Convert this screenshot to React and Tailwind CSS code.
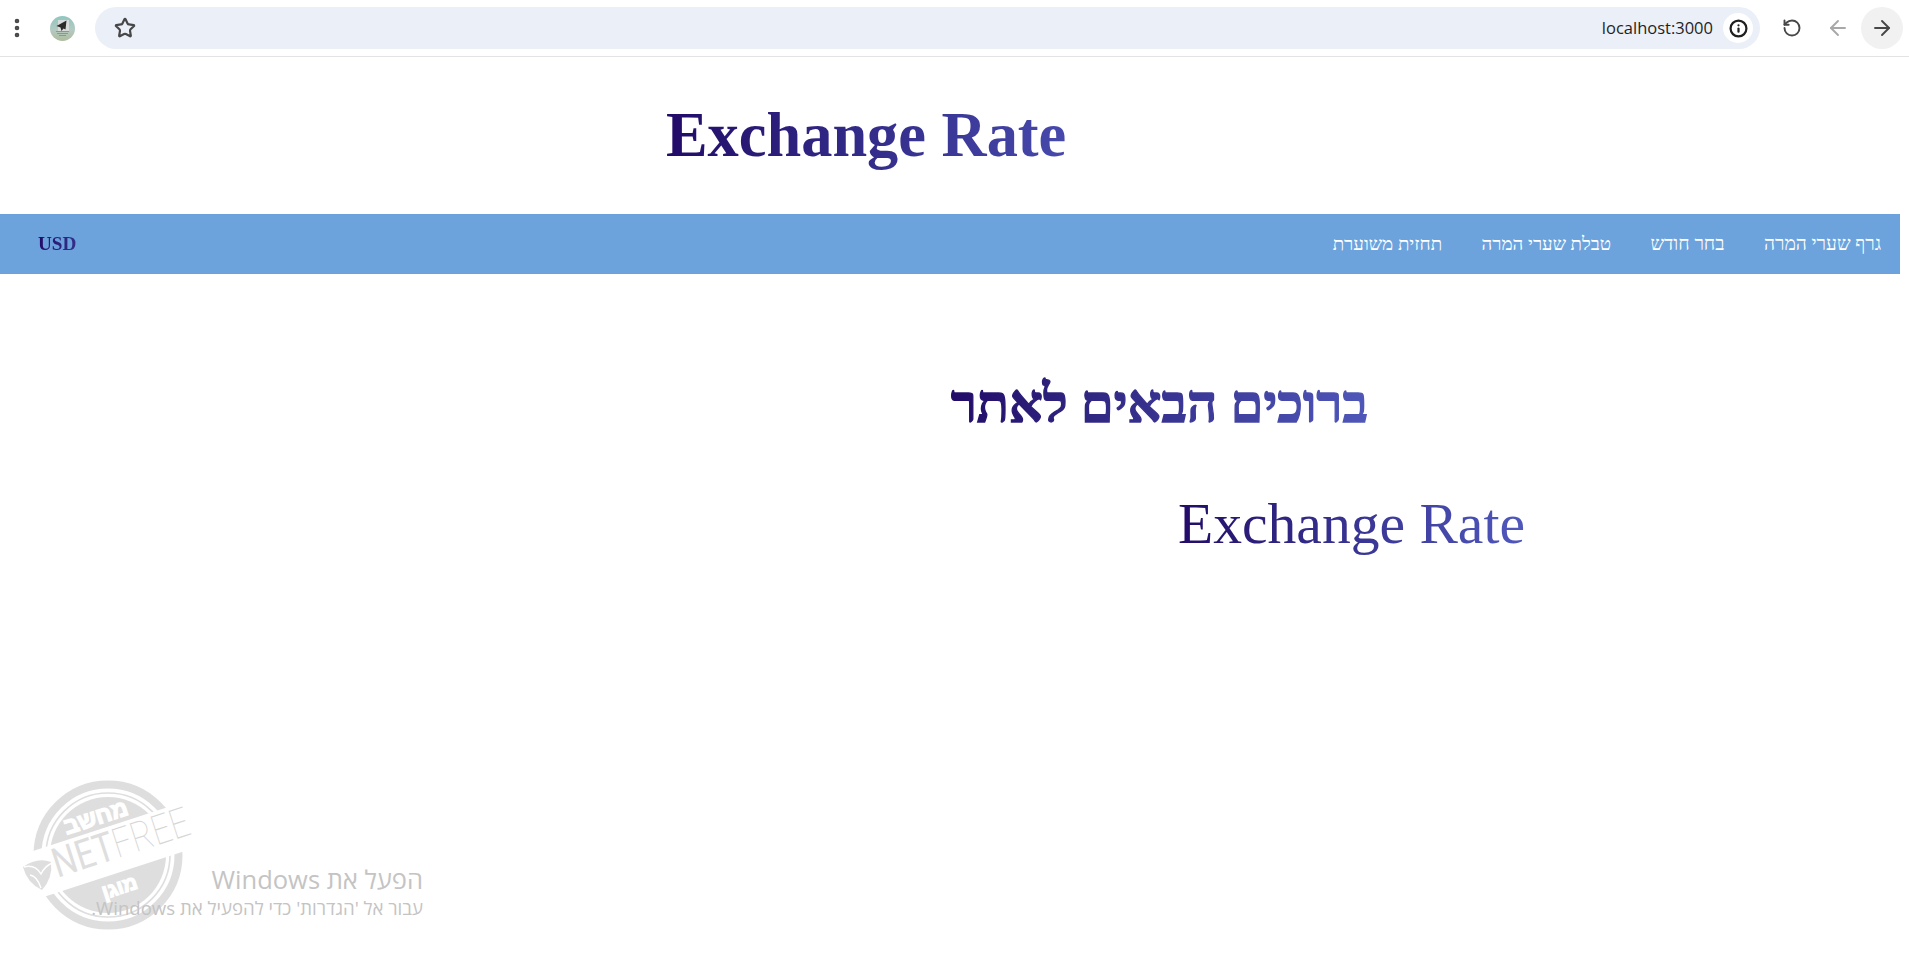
import React from 'react';
import { ArrowLeft, ArrowRight, Info, MoreVertical, RotateCcw, Star } from 'lucide-react';

const navItems = [
  { label: 'גרף שערי המרה', size: 'text-[19.2px]' },
  { label: 'בחר חודש', size: 'text-[19.2px]' },
  { label: 'טבלת שערי המרה', size: 'text-[18.7px]' },
  { label: 'תחזית משוערת', size: 'text-[18.8px]' },
];

function Favicon() {
  return (
    <svg viewBox="0 0 25 25" className="ml-[21px] h-[25px] w-[25px]">
      <defs>
        <linearGradient id="fav" x1="0" y1="0" x2="0" y2="1">
          <stop offset="0" stopColor="#8fc6c0" />
          <stop offset="0.55" stopColor="#b4c9c2" />
          <stop offset="1" stopColor="#aebd9e" />
        </linearGradient>
      </defs>
      <circle cx="12.5" cy="12.5" r="12.5" fill="url(#fav)" />
      <rect x="8" y="4" width="11" height="11" fill="#d8dcd9" />
      <path d="M16.5 4.5 L6.5 10 L10.5 11.5 L11.5 15 L13.5 12.5 L15.5 13.5 Z" fill="#2b2b2b" />
      <path d="M6 15.5h13M7 17.5h11M9 19.5h7" stroke="#8d8f8c" strokeWidth="0.9" />
    </svg>
  );
}

function BrowserBar() {
  return (
    <div className="flex h-[57px] items-center border-b border-[#e3e3e3] bg-white">
      <MoreVertical className="ml-[5px] h-[24px] w-[24px] text-[#474747]" strokeWidth={2.6} />
      <Favicon />
      <div className="ml-[20px] flex h-[42px] w-[1665px] items-center justify-between rounded-full bg-[#ebeff8] pl-[19px] pr-[7px]">
        <Star className="h-[22px] w-[22px] text-[#474747]" strokeWidth={2.4} />
        <div className="flex items-center gap-[10px]">
          <span className="text-[16.5px] text-[#1f1f1f] [font-family:'Open_Sans',sans-serif]">localhost:3000</span>
          <div className="flex h-[30px] w-[30px] items-center justify-center rounded-full bg-white">
            <Info className="h-[19px] w-[19px] text-[#1f1f1f]" strokeWidth={2.8} />
          </div>
        </div>
      </div>
      <RotateCcw className="ml-[22px] h-[20px] w-[20px] text-[#474747]" strokeWidth={2.3} />
      <ArrowLeft className="ml-[24px] h-[24px] w-[24px] text-[#a8a8a8]" strokeWidth={1.9} />
      <div className="ml-[11px] flex h-[42px] w-[42px] items-center justify-center rounded-full bg-[#f1f1f1]">
        <ArrowRight className="h-[24px] w-[24px] text-[#474747]" strokeWidth={1.9} />
      </div>
    </div>
  );
}

function NetfreeStamp() {
  return (
    <svg viewBox="0 0 190 160" className="h-[160px] w-[190px] overflow-visible">
      <circle cx="93" cy="80" r="70.5" fill="none" stroke="#dedede" strokeWidth="8" />
      <circle cx="93" cy="80" r="62" fill="none" stroke="#dedede" strokeWidth="1.6" />
      <circle cx="93" cy="80" r="58" fill="#dedede" />
      <g transform="rotate(-18 93 80)">
        <rect x="-20" y="53" width="240" height="47" fill="#fff" />
        <text x="93" y="48" textAnchor="middle" fontSize="23" fontWeight="700" fill="#fff" stroke="#fff" strokeWidth="1.4" fontFamily="Liberation Sans, sans-serif">מחשב</text>
        <text x="94" y="121" textAnchor="middle" fontSize="20" fontWeight="700" fill="#fff" stroke="#fff" strokeWidth="1.4" fontFamily="Liberation Sans, sans-serif">מוגן</text>
        <text x="38" y="86" fontSize="41" textLength="142" lengthAdjust="spacingAndGlyphs" fill="#dedede" fontFamily="Roboto, sans-serif">
          NET<tspan fontWeight="100" fill="#d6d6d6">FREE</tspan>
        </text>
      </g>
      <path d="M8 92 Q22 82 36 87 Q38 103 27 115 Q12 108 8 92 Z" fill="#dedede" />
      <path d="M9 92 Q20 89 26 99 Q29 92 37 88 M15 100 Q22 101 26 113" fill="none" stroke="#fff" strokeWidth="1.4" />
    </svg>
  );
}

function WindowsNotice() {
  return (
    <div className="absolute left-[15px] top-[775px] h-[160px] w-[408px]">
      <NetfreeStamp />
      <div dir="rtl" className="absolute right-0 top-[87px] text-right text-[#c4c4c4] [font-family:'Open_Sans',sans-serif]">
        <p className="text-[25.5px] leading-[34px]">הפעל את Windows</p>
        <p className="text-[18.6px] leading-[24px]">עבור אל 'הגדרות' כדי להפעיל את Windows.</p>
      </div>
    </div>
  );
}

export default function App() {
  return (
    <div className="relative h-[957px] overflow-hidden bg-white [font-family:'Liberation_Serif','Times_New_Roman',serif]">
      <BrowserBar />
      <div className="w-[1900px]">
        <div className="flex h-[157px] items-center pl-[666px]">
          <h1 className="bg-gradient-to-r from-[#220a68] to-[#5058bd] bg-clip-text pr-[100px] text-[62.4px] font-bold leading-[1.2] text-transparent">
            Exchange Rate
          </h1>
        </div>
        <nav dir="rtl" className="flex h-[60px] items-center justify-between bg-[#6ca3dc] pl-[38px] pr-[19px]">
          <ul className="flex items-center gap-[39.5px] text-white">
            {navItems.map((item) => (
              <li key={item.label} className={item.size}>{item.label}</li>
            ))}
          </ul>
          <span className="bg-gradient-to-r from-[#220a68] to-[#33308a] bg-clip-text text-[19.2px] font-bold text-transparent">USD</span>
        </nav>
        <main dir="rtl" className="flex flex-col pt-[95px]">
          <h2 className="mr-[532px] w-fit bg-gradient-to-l from-[#4f57b9] to-[#220a68] bg-clip-text text-[52.8px] font-bold leading-[70px] text-transparent [-webkit-text-stroke:1.3px_transparent]">
            ברוכים הבאים לאתר
          </h2>
          <div className="mr-[375px] mt-[49px] w-fit bg-gradient-to-r from-[#220a68] to-[#5058bd] bg-clip-text text-[57.6px] leading-[72px] text-transparent">
            Exchange Rate
          </div>
        </main>
      </div>
      <WindowsNotice />
    </div>
  );
}
